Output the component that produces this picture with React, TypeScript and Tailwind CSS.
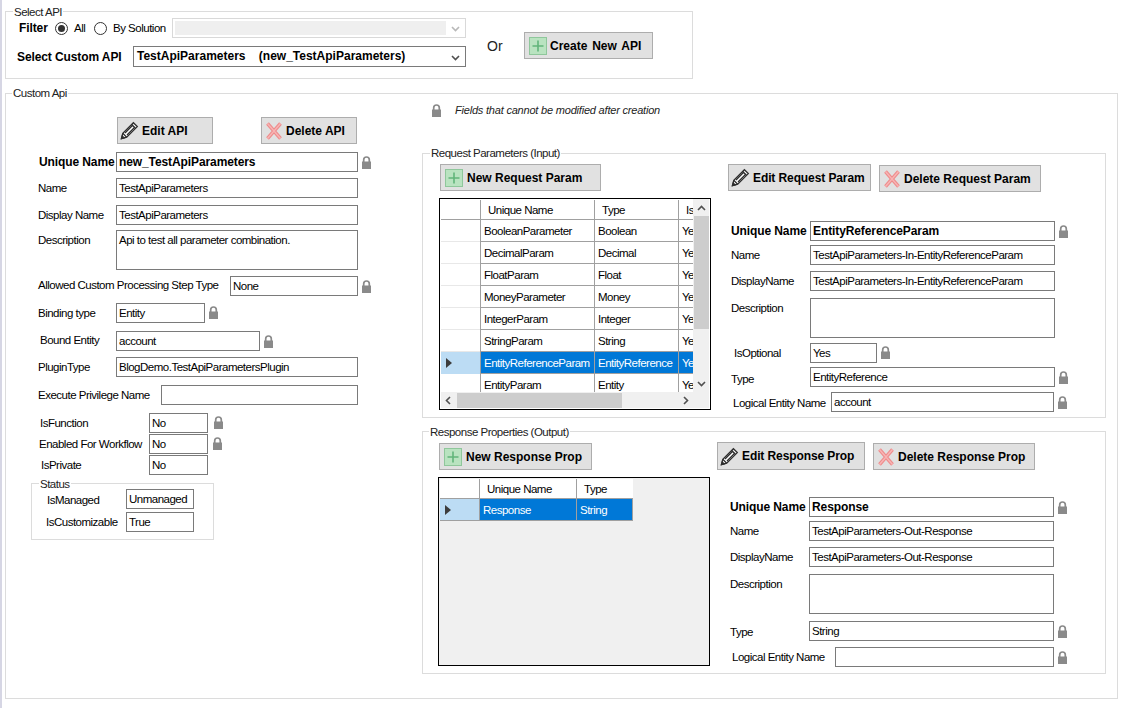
import React from "react";

const regular = "text-[11.5px] tracking-[-0.5px]";
const bolded = "font-bold text-[12px] tracking-[-0.1px]";

const Lock = ({ className = "" }: { className?: string }) => (
  <svg viewBox="0 0 9 13" className={"block w-[9px] h-[13px] shrink-0 " + className}>
    <path d="M1.7 6.5V3.7C1.7 2 2.8 1 4.5 1s2.8 1 2.8 2.7v2.8" fill="none" stroke="#8a8a8a" strokeWidth="1.7" />
    <rect x="0" y="5.5" width="9" height="7.5" fill="#8a8a8a" />
  </svg>
);

const Plus = () => (
  <svg viewBox="0 0 18 18" className="block w-[18px] h-[18px] shrink-0">
    <rect x="0.5" y="0.5" width="17" height="17" fill="#b9e3c0" stroke="#8fc79b" />
    <path d="M9 3.5v11M3.5 9h11" stroke="#62b57a" strokeWidth="1.6" fill="none" />
  </svg>
);

const Cross = () => (
  <svg viewBox="0 0 16 18" className="block w-[16px] h-[18px] shrink-0">
    <path d="M1.5 1.5l13 15M14.5 1.5l-13 15" stroke="#ee8c8c" strokeWidth="3.6" fill="none" />
    <path d="M1.5 1.5l13 15M14.5 1.5l-13 15" stroke="#f8b4b4" strokeWidth="1.4" fill="none" />
  </svg>
);

const PencilIcon = () => (
  <svg viewBox="0 0 19 19" className="block w-[19px] h-[19px] shrink-0" fill="none" stroke="#2e2e2e" strokeWidth="1.3">
    <path d="M1.5 17.5l1.3-5.2L13.4 1.7l3.9 3.9L6.7 16.2z" fill="#fff" />
    <path d="M11.6 3.5l3.9 3.9M2.8 12.3l3.9 3.9M5 12L13.2 3.8M7 14l8.2-8.2" />
    <path d="M1.5 17.5l.7-2.6 1.9 1.9z" fill="#2e2e2e" />
  </svg>
);

const Button = ({ icon, text, className }: { icon: React.ReactNode; text: string; className: string }) => (
  <div className={"flex items-center shrink-0 h-[27px] bg-[#e1e1e1] border border-[#adadad] font-bold text-[12px] text-black whitespace-nowrap " + className}>
    {icon}
    <span>{text}</span>
  </div>
);

const Input = ({ value, className, bold }: { value?: string; className: string; bold?: boolean }) => (
  <div className={"h-[20px] shrink-0 border border-[#7a7a7a] bg-white pl-[2px] leading-[19px] text-black whitespace-nowrap overflow-hidden " + (bold ? bolded + " " : regular + " ") + className}>
    {value}
  </div>
);

const Legend = ({ text, className }: { text: string; className: string }) => (
  <span className={"absolute bg-white px-[1px] leading-[14px] text-[#222] whitespace-nowrap " + regular + " " + className}>{text}</span>
);

const Label = ({ text, className, bold }: { text: string; className: string; bold?: boolean }) => (
  <span className={"shrink-0 leading-[14px] text-black whitespace-nowrap " + (bold ? bolded + " " : regular + " ") + className}>{text}</span>
);

const cellText = "px-[3px] leading-[22px] whitespace-nowrap overflow-hidden " + regular;

const Arrow = () => (
  <svg viewBox="0 0 6 10" className="block w-[6px] h-[10px]"><path d="M0 0l6 5-6 5z" fill="#3c3c3c" /></svg>
);

const Row = ({ a, b, selected }: { a: string; b: string; selected?: boolean }) => (
  <div className={"flex h-[22px] shrink-0 " + (selected ? "text-white" : "text-black")}>
    <div className={"w-[39px] shrink-0 flex items-center pl-[5px] border-b " + (selected ? "bg-[#bcdcf4] border-[#bcdcf4]" : "bg-white border-[#e8e8e8]")}>
      {selected ? <Arrow /> : null}
    </div>
    <div className={"w-[114px] shrink-0 border-l border-b border-[#a0a0a0] " + (selected ? "bg-[#0078d7] " : "bg-white ") + cellText}>{a}</div>
    <div className={"w-[84px] shrink-0 border-l border-b border-[#a0a0a0] " + (selected ? "bg-[#0078d7] " : "bg-white ") + cellText}>{b}</div>
    <div className={"w-[15px] shrink-0 border-l border-b border-[#a0a0a0] " + (selected ? "bg-[#0078d7] " : "bg-white ") + cellText}>Yes</div>
  </div>
);

const HeadCell = ({ text, className }: { text?: string; className: string }) => (
  <div className={"shrink-0 bg-white border-b border-[#a0a0a0] leading-[20px] text-black whitespace-nowrap overflow-hidden " + regular + " " + className}>{text}</div>
);

const rows = [
  ["BooleanParameter", "Boolean"],
  ["DecimalParam", "Decimal"],
  ["FloatParam", "Float"],
  ["MoneyParameter", "Money"],
  ["IntegerParam", "Integer"],
  ["StringParam", "String"],
  ["EntityReferenceParam", "EntityReference"],
  ["EntityParam", "Entity"],
];

const Chevron = ({ d, className = "" }: { d: string; className?: string }) => (
  <svg viewBox="0 0 9 9" className={"block w-[9px] h-[9px] " + className}><path d={d} fill="none" stroke="#505050" strokeWidth="1.6" /></svg>
);

export default function App() {
  return (
    <div className="w-[1123px] h-[708px] bg-white overflow-hidden pt-[11px] pl-[3px] border-l-2 border-[#d6d6e4] font-['Liberation_Sans',Arial,sans-serif]">
      {/* Select API */}
      <div className="relative w-[688px] h-[68px] border border-[#dcdcdc] flex">
        <Legend text="Select API" className="left-[7px] top-[-7px]" />
        <div className="w-[460px] shrink-0 flex flex-col">
          <div className="flex items-center ml-[13px] mt-[6px] h-[20px]">
            <Label text="Filter" bold className="w-[36px] -mt-[1px]" />
            <span className="w-[13px] h-[13px] rounded-full border border-[#333] flex items-center justify-center shrink-0">
              <span className="w-[7px] h-[7px] rounded-full bg-[#333]" />
            </span>
            <Label text="All" className="ml-[6px] w-[20px]" />
            <span className="w-[13px] h-[13px] rounded-full border border-[#333] shrink-0" />
            <Label text="By Solution" className="ml-[6px] w-[59px]" />
            <div className="w-[294px] h-[20px] border border-[#d9d9d9] bg-white p-[2px] pr-[19px] flex relative">
              <div className="flex-1 bg-[#efefef]" />
              <Chevron d="M1 3l3.5 3.5L8 3" className="absolute right-[5px] top-[5px] opacity-40" />
            </div>
          </div>
          <div className="flex items-center mt-[8px] h-[21px]">
            <Label text="Select Custom API" bold className="ml-[11px] w-[116px]" />
            <div className="relative w-[333px] h-[21px] shrink-0 border border-[#7a7a7a] pl-[3px] text-[12px] leading-[18px] font-bold text-black whitespace-pre">
              {"TestApiParameters    (new_TestApiParameters)"}
              <Chevron d="M1 3l3.5 3.5L8 3" className="absolute right-[5px] top-[6px]" />
            </div>
          </div>
        </div>
        <div className="flex items-center mt-[20px] h-[27px]">
          <span className="ml-[21px] w-[16px] mt-[2px] text-[14px] text-[#222]">Or</span>
          <Button icon={<Plus />} text="Create New API" className="ml-[21px] pl-[4px] gap-[3px] w-[129px] [word-spacing:1.5px]" />
        </div>
      </div>

      {/* Custom Api */}
      <div className="relative w-[1113px] h-[606px] mt-[14px] border border-[#dcdcdc] flex">
        <Legend text="Custom Api" className="left-[6px] top-[-8px]" />
        <div className="w-[416px] shrink-0 flex flex-col">
          <div className="flex mt-[23px] ml-[111px] gap-[48px]">
            <Button icon={<PencilIcon />} text="Edit API" className="w-[96px] pl-[2px] gap-[3px]" />
            <Button icon={<Cross />} text="Delete API" className="w-[96px] pl-[4px] gap-[4px]" />
          </div>
          <div className="flex items-center mt-[8px] ml-[33px]">
            <Label text="Unique Name" bold className="w-[77px]" />
            <Input value="new_TestApiParameters" bold className="w-[242px]" />
            <Lock className="ml-[4px]" />
          </div>
          <div className="flex items-center mt-[6px] ml-[32px]">
            <Label text="Name" className="w-[78px]" />
            <Input value="TestApiParameters" className="w-[242px]" />
          </div>
          <div className="flex items-center mt-[7px] ml-[32px]">
            <Label text="Display Name" className="w-[78px]" />
            <Input value="TestApiParameters" className="w-[242px]" />
          </div>
          <div className="flex items-start mt-[5px] ml-[32px]">
            <Label text="Description" className="w-[78px] mt-[3px]" />
            <Input value="Api to test all parameter combination." className="w-[242px] h-[40px]" />
          </div>
          <div className="flex items-center mt-[6px] ml-[32px]">
            <Label text="Allowed Custom Processing Step Type" className="w-[192px] -mt-[2px]" />
            <Input value="None" className="w-[128px]" />
            <Lock className="ml-[4px]" />
          </div>
          <div className="flex items-center mt-[7px] ml-[32px]">
            <Label text="Binding type" className="w-[78px]" />
            <Input value="Entity" className="w-[89px]" />
            <Lock className="ml-[4px] -mt-[1px]" />
          </div>
          <div className="flex items-center mt-[8px] ml-[32px]">
            <Label text="Bound Entity" className="w-[76px] ml-[2px] -mt-[3px]" />
            <Input value="account" className="w-[144px]" />
            <Lock className="ml-[4px]" />
          </div>
          <div className="flex items-center mt-[6px] ml-[32px]">
            <Label text="PluginType" className="w-[78px]" />
            <Input value="BlogDemo.TestApiParametersPlugin" className="w-[242px]" />
          </div>
          <div className="flex items-center mt-[8px] ml-[32px]">
            <Label text="Execute Privilege Name" className="w-[123px]" />
            <Input className="w-[197px]" />
          </div>
          <div className="flex items-center mt-[8px] ml-[34px]">
            <Label text="IsFunction" className="w-[109px]" />
            <Input value="No" className="w-[59px]" />
            <Lock className="ml-[6px] -mt-[2px]" />
          </div>
          <div className="flex items-center mt-[1px] ml-[33px]">
            <Label text="Enabled For Workflow" className="w-[110px]" />
            <Input value="No" className="w-[59px]" />
            <Lock className="ml-[5px] -mt-[2px]" />
          </div>
          <div className="flex items-center mt-[1px] ml-[35px]">
            <Label text="IsPrivate" className="w-[108px]" />
            <Input value="No" className="w-[59px]" />
          </div>
          <div className="relative w-[183px] h-[57px] mt-[8px] ml-[25px] border border-[#dcdcdc] flex flex-col">
            <Legend text="Status" className="left-[7px] top-[-7px]" />
            <div className="flex items-center mt-[5px] ml-[15px]">
              <Label text="IsManaged" className="w-[79px] mt-[2px]" />
              <Input value="Unmanaged" className="w-[68px]" />
            </div>
            <div className="flex items-center mt-[3px] ml-[14px]">
              <Label text="IsCustomizable" className="w-[80px]" />
              <Input value="True" className="w-[68px]" />
            </div>
          </div>
        </div>

        <div className="flex-1 flex flex-col">
          <div className="flex items-center mt-[9px] ml-[10px] h-[14px]">
            <Lock />
            <span className="ml-[14px] italic text-[11px] tracking-[-0.2px] text-[#222] whitespace-nowrap">Fields that cannot be modified after creation</span>
          </div>

          {/* Request */}
          <div className="relative w-[684px] h-[265px] mt-[36px] border border-[#dcdcdc] flex">
            <Legend text="Request Parameters (Input)" className="left-[7px] top-[-8px]" />
            <div className="w-[305px] shrink-0 flex flex-col pl-[17px] pt-[10px]">
              <Button icon={<Plus />} text="New Request Param" className="w-[161px] pl-[4px] gap-[4px]" />
              <div className="mt-[7px] -ml-[1px] w-[272px] h-[212px] border border-black p-[1px] bg-white relative overflow-hidden flex flex-col">
                <div className="flex h-[20px] shrink-0">
                  <HeadCell className="w-[39px]" />
                  <HeadCell text="Unique Name" className="w-[114px] border-l pl-[7px]" />
                  <HeadCell text="Type" className="w-[84px] border-l pl-[7px]" />
                  <HeadCell text="Is" className="w-[15px] border-l pl-[7px]" />
                </div>
                {rows.slice(0, 7).map((r, i) => <Row key={r[0]} a={r[0]} b={r[1]} selected={i === 6} />)}
                <div className="h-[20px] overflow-hidden"><Row a={rows[7][0]} b={rows[7][1]} /></div>
                <div className="absolute right-[1px] top-[0px] bottom-[1px] w-[16px] bg-[#f0f0f0] flex flex-col items-center">
                  <Chevron d="M1 6l3.5-3.5L8 6" className="mt-[5px]" />
                  <div className="w-[15px] h-[113px] bg-[#cdcdcd] mt-[3px]" />
                  <Chevron d="M1 3l3.5 3.5L8 3" className="mt-[50px]" />
                </div>
                <div className="absolute left-[1px] right-[1px] bottom-[1px] h-[16px] bg-[#f0f0f0] flex items-center">
                  <Chevron d="M6 1L2.5 4.5 6 8" className="ml-[3px]" />
                  <div className="w-[165px] h-[15px] bg-[#cdcdcd] ml-[4px]" />
                  <Chevron d="M3 1l3.5 3.5L3 8" className="ml-[59px]" />
                </div>
              </div>
            </div>
            <div className="flex-1 flex flex-col">
              <div className="flex items-start mt-[10px]">
                <Button icon={<PencilIcon />} text="Edit Request Param" className="w-[143px] pl-[2px] gap-[3px] tracking-[-0.1px]" />
                <Button icon={<Cross />} text="Delete Request Param" className="w-[162px] ml-[8px] pl-[4px] gap-[4px] mt-[1px] h-[26px]" />
              </div>
              <div className="flex items-center mt-[29px] ml-[3px]">
                <Label text="Unique Name" bold className="w-[79px]" />
                <Input value="EntityReferenceParam" bold className="w-[245px]" />
                <Lock className="ml-[4px]" />
              </div>
              <div className="flex items-center mt-[4px] ml-[3px]">
                <Label text="Name" className="w-[79px]" />
                <Input value="TestApiParameters-In-EntityReferenceParam" className="w-[245px]" />
              </div>
              <div className="flex items-center mt-[6px] ml-[3px]">
                <Label text="DisplayName" className="w-[79px]" />
                <Input value="TestApiParameters-In-EntityReferenceParam" className="w-[245px]" />
              </div>
              <div className="flex items-start mt-[7px] ml-[3px]">
                <Label text="Description" className="w-[79px] mt-[3px]" />
                <Input className="w-[245px] h-[40px]" />
              </div>
              <div className="flex items-center mt-[5px] ml-[6px]">
                <Label text="IsOptional" className="w-[76px]" />
                <Input value="Yes" className="w-[67px]" />
                <Lock className="ml-[4px] -mt-[2px]" />
              </div>
              <div className="flex items-center mt-[4px] ml-[3px]">
                <Label text="Type" className="w-[79px] mt-[3px]" />
                <Input value="EntityReference" className="w-[245px]" />
                <Lock className="ml-[4px]" />
              </div>
              <div className="flex items-center mt-[5px] ml-[5px]">
                <Label text="Logical Entity Name" className="w-[98px] mt-[2px]" />
                <Input value="account" className="w-[223px]" />
                <Lock className="ml-[4px]" />
              </div>
            </div>
          </div>

          {/* Response */}
          <div className="relative w-[684px] h-[243px] mt-[13px] border border-[#dcdcdc] flex">
            <Legend text="Response Properties (Output)" className="left-[6px] top-[-7px]" />
            <div className="w-[294px] shrink-0 flex flex-col pl-[16px] pt-[11px]">
              <Button icon={<Plus />} text="New Response Prop" className="w-[153px] pl-[4px] gap-[4px]" />
              <div className="mt-[7px] -ml-[1px] w-[272px] h-[189px] border border-black p-[1px] bg-[#f0f0f0] flex flex-col">
                <div className="flex h-[20px] shrink-0">
                  <HeadCell className="w-[39px]" />
                  <HeadCell text="Unique Name" className="w-[97px] border-l pl-[7px]" />
                  <HeadCell text="Type" className="w-[57px] border-l pl-[7px]" />
                </div>
                <div className="flex h-[22px] shrink-0 text-white">
                  <div className="w-[39px] shrink-0 flex items-center pl-[5px] bg-[#bcdcf4] border-b border-[#a0a0a0]"><Arrow /></div>
                  <div className={"w-[97px] shrink-0 bg-[#0078d7] border-l border-b border-[#a0a0a0] " + cellText}>Response</div>
                  <div className={"w-[57px] shrink-0 bg-[#0078d7] border-l border-b border-r border-[#a0a0a0] " + cellText}>String</div>
                </div>
              </div>
            </div>
            <div className="flex-1 flex flex-col">
              <div className="flex items-start mt-[10px]">
                <Button icon={<PencilIcon />} text="Edit Response Prop" className="w-[148px] h-[28px] pl-[2px] gap-[3px] tracking-[-0.1px]" />
                <Button icon={<Cross />} text="Delete Response Prop" className="w-[162px] ml-[8px] pl-[4px] gap-[4px] mt-[1px]" />
              </div>
              <div className="flex items-center mt-[27px] ml-[13px]">
                <Label text="Unique Name" bold className="w-[79px]" />
                <Input value="Response" bold className="w-[245px]" />
                <Lock className="ml-[4px]" />
              </div>
              <div className="flex items-center mt-[4px] ml-[13px]">
                <Label text="Name" className="w-[79px]" />
                <Input value="TestApiParameters-Out-Response" className="w-[245px]" />
              </div>
              <div className="flex items-center mt-[6px] ml-[13px]">
                <Label text="DisplayName" className="w-[79px]" />
                <Input value="TestApiParameters-Out-Response" className="w-[245px]" />
              </div>
              <div className="flex items-start mt-[7px] ml-[13px]">
                <Label text="Description" className="w-[79px] mt-[3px]" />
                <Input className="w-[245px] h-[40px]" />
              </div>
              <div className="flex items-center mt-[7px] ml-[13px]">
                <Label text="Type" className="w-[79px] mt-[2px]" />
                <Input value="String" className="w-[245px]" />
                <Lock className="ml-[4px]" />
              </div>
              <div className="flex items-center mt-[6px] ml-[15px]">
                <Label text="Logical Entity Name" className="w-[103px]" />
                <Input className="w-[219px]" />
                <Lock className="ml-[4px]" />
              </div>
            </div>
          </div>
        </div>
      </div>
    </div>
  );
}
